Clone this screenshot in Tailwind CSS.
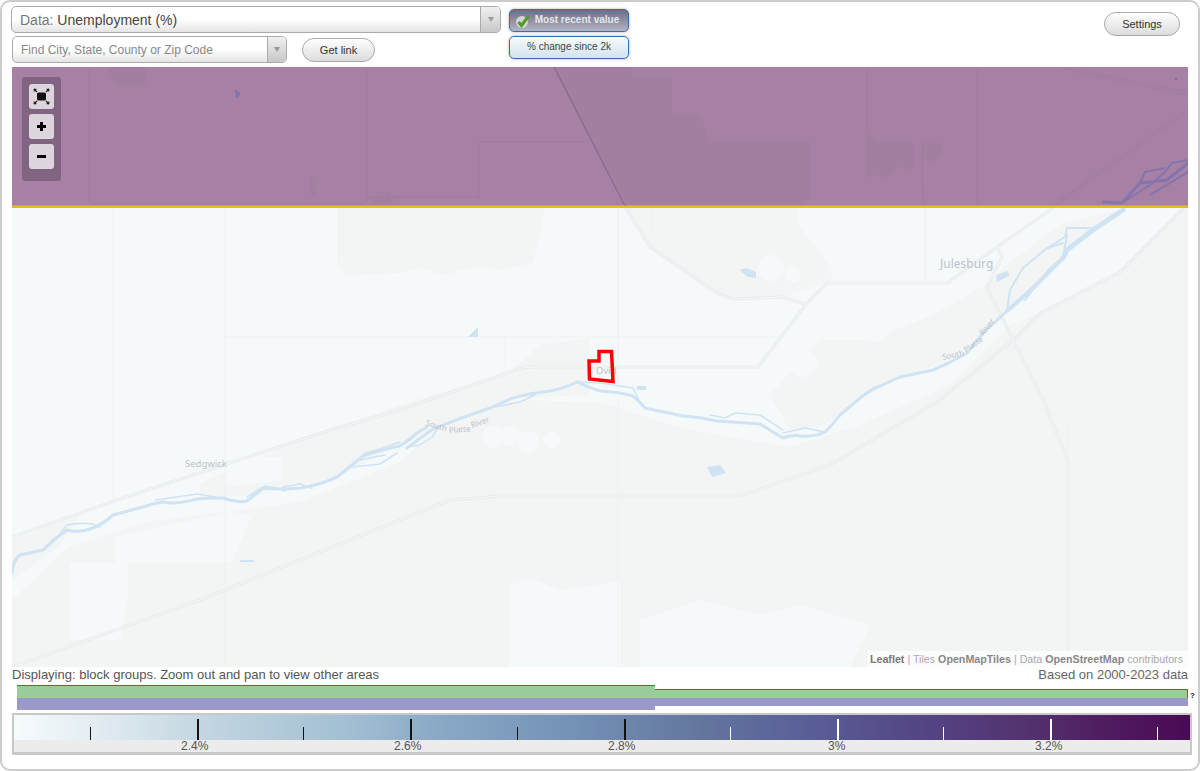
<!DOCTYPE html>
<html lang="en">
<head>
<meta charset="utf-8">
<title>Unemployment map</title>
<script src="https://cdn.jsdelivr.net/npm/@tailwindcss/browser@4"></script>
</head>
<body class="bg-white font-['Liberation_Sans',Arial,sans-serif]">
<div class="relative w-[1200px] h-[771px] overflow-hidden border-2 border-[#cccccc] rounded-[10px] bg-white text-[#333]">
  <!-- top controls -->
  <header class="flex h-[65px] items-start">
    <div class="ml-[9px] pt-[4px] flex flex-col">
      <div class="flex w-[490px] h-[27px] border border-[#aaa] rounded-[5px] overflow-hidden bg-gradient-to-b from-white from-50% to-[#e4e4e4]">
        <div class="flex-1 pl-[8px] text-[14px] leading-[27px] text-[#444]"><span class="text-[#777]">Data:</span> <span>Unemployment (%)</span></div>
        <div class="w-[20px] border-l border-[#aaa] bg-gradient-to-b from-[#f0f0f0] to-[#c8c8c8] flex items-center justify-center"><span class="block w-0 h-0 border-x-[3.5px] border-x-transparent border-t-[5px] border-t-[#999]"></span></div>
      </div>
      <div class="flex items-start mt-[3px] ml-px">
        <div class="flex w-[275px] h-[27px] border border-[#aaa] rounded-[5px] overflow-hidden bg-gradient-to-b from-white from-50% to-[#e4e4e4]">
          <div class="flex-1 pl-[8px] text-[12px] leading-[27px] text-[#888]">Find City, State, County or Zip Code</div>
          <div class="w-[19px] border-l border-[#aaa] bg-gradient-to-b from-[#f0f0f0] to-[#c8c8c8] flex items-center justify-center"><span class="block w-0 h-0 border-x-[3.5px] border-x-transparent border-t-[5px] border-t-[#999]"></span></div>
        </div>
        <button class="ml-[15px] mt-[2px] w-[73px] h-[24px] rounded-full border border-[#aaa] bg-gradient-to-b from-white to-[#dcdcdc] text-[11px] text-[#333]">Get link</button>
      </div>
    </div>
    <div class="ml-[8px] pt-[7px] flex flex-col gap-[4px]">
      <div class="relative w-[120px] h-[23px] rounded-[5px] border border-[#3a6ea5] bg-gradient-to-b from-[#6e6e80] to-[#b4b4c4] shadow-[0_0_3px_#aaa] text-center text-[10px] font-bold leading-[20px] text-[#e6e6ee] pl-[16px]">
        <svg class="absolute left-[5px] top-[3px]" width="15" height="16" viewBox="0 0 15 16"><circle cx="7" cy="9" r="6" fill="#d4d4d4"/><path d="M3.500 9 L6.500 12.500 L13.500 3" fill="none" stroke="#4f9a2a" stroke-width="3"/></svg>
        Most recent value
      </div>
      <div class="w-[120px] h-[23px] rounded-[5px] border border-[#3a6ea5] bg-gradient-to-b from-[#f6fafc] to-[#d2e3ec] shadow-[0_0_3px_#aaa] text-center text-[10px] leading-[20px] text-[#444]">% change since 2k</div>
    </div>
    <button class="ml-auto mr-[18px] mt-[10px] w-[76px] h-[24px] rounded-full border border-[#aaa] bg-gradient-to-b from-white to-[#dcdcdc] text-[11px] text-[#333]">Settings</button>
  </header>

  <!-- map -->
  <div class="relative mx-[10px] w-[1176px] h-[600px] overflow-hidden bg-[#f5f9fa]">
    <svg class="block" width="1176" height="600" viewBox="12 67 1176 600" font-family="'Noto Sans','Liberation Sans',sans-serif">
      <!-- land cover -->
      <g fill="#f2f5f4">
        <path d="M12 667V600L67 548L145 522L223 512L300 502L400 462L440 425L505 400L600 402L680 428L790 447L860 425L950 385L1010 325L1040 313L1120 272L1188 203V667Z"/>
        <path d="M338 208H545L538 243L532 263L503 270L477 267L443 275L417 268L400 273L345 276L338 262Z"/>
        <path d="M627 208H798V223L827 263L833 280L783 297L733 299L717 293L650 247Z"/>
        <path d="M200 483L300 440L337 428L400 405L510 372L540 345L590 338V395L510 398L400 445L337 477L250 495L200 500Z"/>
        <path d="M900 335L985 285L1010 262L1060 225L1125 208L1070 250L1010 310L985 335L945 362L900 378Z"/>
        <path d="M12 580V540L80 515L60 545Z"/>
        <path d="M820 340L870 340L945 310L960 350L880 385L825 425L790 430L770 395Z"/>
      </g>
      <g fill="#f5f9fa">
        <path d="M70 563H128V598L120 640L70 640Z"/>
        <path d="M115 537L230 512L252 515L232 563H115Z"/>
        <path d="M227 457H282V480L227 487Z"/>
        <path d="M510 585L530 578L560 590L600 585L620 580V667H510Z"/>
        <path d="M640 620L700 600L760 615L800 605L870 625L850 667H640Z"/>
        <path d="M290 430H337V418L300 422Z"/>
        <path d="M400 345L440 337L450 345L440 365L405 375L400 360Z"/>
        <circle cx="493" cy="437" r="11"/><circle cx="510" cy="436" r="10"/><circle cx="528" cy="442" r="11"/><circle cx="552" cy="440" r="9"/>
        <circle cx="771" cy="268" r="13"/><circle cx="793" cy="274" r="8"/>
        <circle cx="803" cy="363" r="14"/>
        <circle cx="852" cy="325" r="13"/><circle cx="876" cy="330" r="12"/>
        <path d="M1010 240L1025 232L1020 255L1010 258Z"/>
        <path d="M1125 222L1165 205L1150 225L1130 228Z"/>
      </g>
      <!-- section lines -->
      <g stroke="#eef1f2" stroke-width="1" fill="none">
        <path d="M113 207V500"/><path d="M225 207V667"/><path d="M618 207V667"/><path d="M652 207V230"/>
        <path d="M225 337H780"/><path d="M338 207V270"/><path d="M505 337V367"/>
        <path d="M925 207V282"/><path d="M1068 420V667"/>
      </g>
      <!-- roads -->
      <g fill="none" stroke-linejoin="round">
        <g stroke="#e7ebeb" stroke-width="3">
          <path d="M12 537L117 500L223 465L337 428L400 410L510 372Q520 367 535 367H758L807 303L827 283H947L997 247L1053 208"/>
          <path d="M625 207L650 247L717 293L733 299L783 297L807 305"/>
          <path d="M12 667L200 600L450 500L500 496H740L830 465L940 400L1013 340L1040 313L1120 272L1188 203"/>
          <path d="M997 247L1002 257L987 287L1013 340L1043 400L1068 460V650"/>
        </g>
        <g stroke="#f6f9f9" stroke-width="1">
          <path d="M12 537L117 500L223 465L337 428L400 410L510 372Q520 367 535 367H758L807 303L827 283H947L997 247L1053 208"/>
          <path d="M625 207L650 247L717 293L733 299L783 297L807 305"/>
          <path d="M12 667L200 600L450 500L500 496H740L830 465L940 400L1013 340L1040 313L1120 272L1188 203"/>
          <path d="M997 247L1002 257L987 287L1013 340L1043 400L1068 460V650"/>
        </g>
      </g>
      <!-- water -->
      <g fill="none" stroke="#d0e3f3" stroke-linejoin="round" stroke-linecap="round">
        <path stroke-width="3.200" d="M12 573Q13 560 20 555Q30 553 43 550L56 538L67 530Q78 533 90 529Q102 525 113 515L143 507Q155 503 163 502Q175 505 197 499Q210 498 223 498Q238 503 247 501Q255 495 263 488Q280 490 300 488Q320 485 337 477L363 456Q380 450 400 446Q410 440 417 433L427 427"/>
        <path stroke-width="1.500" d="M57 537L67 525Q80 522 92 524L100 527M155 500L177 497L197 494L215 497M247 497L258 490L265 486Q275 487 285 491M283 487L300 484L312 488M355 463L365 453L380 449L400 442M352 467L380 464L397 453M360 460L385 455M407 447L420 445L432 437L438 428"/>
        <path stroke-width="3" d="M407 448L433 429Q460 418 490 408L510 399Q530 393 550 391Q565 388 577 382Q590 388 600 391Q620 392 633 396Q640 402 645 408L683 416Q700 417 717 421L760 424L783 438Q795 434 800 436Q815 437 825 432Q835 422 840 415L860 398Q870 390 880 386L900 377L933 370Q950 363 967 353L983 333L1007 311"/>
        <path stroke-width="4" d="M1007 311L1033 288L1063 258"/>
        <path stroke-width="5" d="M1063 258L1067 250L1093 230L1123 210"/>
        <path stroke-width="1.600" d="M577 382L600 383L633 388L640 402M490 408L520 402L535 395M710 415L725 418L735 413L760 415L783 430M783 433L805 428L825 432"/>
        <path stroke-width="2" d="M1007 311L1010 290L1023 268Q1035 258 1047 248L1065 237L1067 228L1093 228M1063 257L1067 235M1025 300L1048 270L1063 257L1070 245M1048 248L1063 243"/>
      </g>
      <g fill="#d0e3f3">
        <path d="M739 270L746 268L756 272L756 278L748 277Z"/>
        <path d="M996 275L1008 271L1009 276L997 282Z"/>
        <path d="M637 386H646V390H637Z"/>
        <path d="M468 337L478 327V337Z"/>
        <path d="M707 467L720 465L726 473L712 477Z"/>
        <path d="M240 560H254V562H240Z"/>
      </g>
      <!-- place labels -->
      <g fill="#bcc3ca">
        <text x="940" y="268" font-size="12">Julesburg</text>
        <text x="185" y="467" font-size="9.500">Sedgwick</text>
        <text x="596" y="374" font-size="9.500">Ovid</text>
        <text x="0" y="0" font-size="8" transform="translate(425 425) rotate(17)">South</text>
        <text x="0" y="0" font-size="8" transform="translate(449 433) rotate(-4)">Platte</text>
        <text x="0" y="0" font-size="8" transform="translate(472 428) rotate(-20)">River</text>
        <text x="0" y="0" font-size="8" transform="translate(943 360) rotate(-12)">South</text>
        <text x="0" y="0" font-size="8" transform="translate(966 353) rotate(-35)">Platte</text>
        <text x="0" y="0" font-size="8" transform="translate(983 336) rotate(-50)">River</text>
      </g>
      <!-- selected boundary -->
      <path d="M589 361H599V351.500H611.500L613 381.500L589.500 379Z" fill="none" stroke="#ff0000" stroke-width="3.500"/>

      <!-- purple choropleth area -->
      <rect x="12" y="67" width="1176" height="139.500" fill="#a680a5"/>
      <g fill="#a27ea1">
        <path d="M554 67H632V78H672V113H699L710 142H810V198L799 205H627Z"/>
        <path d="M867 132L877 142H913V170L897 167L888 178L875 175L867 178Z"/>
        <path d="M922 143H942V155L931 163L922 157Z"/>
        <path d="M107 67H146V85H115Z"/>
        <path d="M367 197H385L388 190L393 197V205H375Z"/>
        <path d="M311 177H316V197H311Z"/>
      </g>
      <g fill="none" stroke="#a07c9f" stroke-width="1">
        <path d="M89 67V200L92 204H364L367 200V67"/>
        <path d="M479 142V197H367"/>
        <path d="M479 142H590"/>
        <path d="M867 67V132"/><path d="M922 143Q922 190 924 205"/><path d="M977 67V205"/>
        <path d="M1053 205L1188 108"/><path d="M1056 205L1188 112"/>
        <path d="M1062 67L1188 92"/><path d="M1062 69L1188 95"/>
      </g>
      <path d="M554 67L625 206" stroke="#8a6a8e" stroke-width="1.400" fill="none"/>
      <path d="M235 90L239 92L240 95L236 98L236 94Z" fill="#8474ac" stroke="#8474ac" stroke-width="1"/>
      <circle cx="1176" cy="79" r="1.500" fill="#8a7590"/>
      <g fill="none" stroke="#8474ac" stroke-linejoin="round">
        <path stroke-width="3" d="M1102 202L1122 203L1140 183L1167 180L1188 163"/>
        <path stroke-width="2" d="M1122 203L1150 185L1165 172L1172 163L1188 160M1140 183L1145 172L1165 168M1150 195L1188 172"/>
      </g>
      <rect x="12" y="205.500" width="1176" height="2.500" fill="#e3bf1c"/>
    </svg>

    <!-- zoom control overlay -->
    <div class="absolute left-[10px] top-[10px] w-[39px] h-[104px] rounded-[3px] bg-[#806482] px-[7px] pt-[7px] flex flex-col gap-[5px]">
      <div class="w-[25px] h-[25px] rounded-[3px] bg-[#ddd5dd] flex items-center justify-center">
        <svg width="17" height="17" viewBox="0 0 17 17"><rect x="4" y="4.500" width="9" height="8" rx="1.500" fill="#111"/><path d="M1 1L4 4M16 1L13 4M1 16L4 13M16 16L13 13" stroke="#222" stroke-width="1.200"/><path d="M1 1H3.500L1 3.500ZM16 1H13.500L16 3.500ZM1 16H3.500L1 13.500ZM16 16H13.500L16 13.500Z" fill="#222" stroke="#222" stroke-width=".5"/></svg>
      </div>
      <div class="w-[25px] h-[25px] rounded-[3px] bg-[#ddd5dd] flex items-center justify-center">
        <svg width="11" height="11" viewBox="0 0 11 11"><path d="M5.500 1V10M1 5.500H10" stroke="#000" stroke-width="3"/></svg>
      </div>
      <div class="w-[25px] h-[25px] rounded-[3px] bg-[#ddd5dd] flex items-center justify-center">
        <svg width="11" height="11" viewBox="0 0 11 11"><path d="M1 5.500H10" stroke="#000" stroke-width="3"/></svg>
      </div>
    </div>
    <!-- attribution overlay -->
    <div class="absolute right-0 bottom-0 h-[16px] pl-[3px] pr-[5px] bg-white/70 text-[10.700px] leading-[16px] text-[#aaa] whitespace-nowrap"><b class="text-[#777]">Leaflet</b> | Tiles <b class="text-[#888]">OpenMapTiles</b> | Data <b class="text-[#888]">OpenStreetMap</b> contributors</div>
  </div>

  <!-- caption row -->
  <div class="flex justify-between h-[18px] px-[10px] text-[13px] leading-[16px] text-[#666]">
    <span class="text-[#555]">Displaying: block groups. Zoom out and pan to view other areas</span>
    <span>Based on 2000-2023 data</span>
  </div>

  <!-- coverage bars -->
  <div class="flex items-start ml-[15px] h-[28px]">
    <div class="w-[638px]">
      <div class="h-[13px] border-t border-[#2f8a2f] bg-[#9acb99]"></div>
      <div class="h-[12px] bg-[#9999ca]"></div>
    </div>
    <div class="w-[533px] mt-[4px]">
      <div class="h-[9px] border-t border-r border-[#2f8a2f] bg-[#9acb99]"></div>
      <div class="h-[8px] bg-[#9999ca]"></div>
    </div>
    <span class="ml-[2px] mt-[7px] text-[8px] leading-[8px] font-bold text-[#222]">?</span>
  </div>

  <!-- colour scale -->
  <div class="ml-[10px] w-[1180px] h-[42px] border-2 border-b-[3px] border-[#c8c8c8]">
    <div class="relative h-[25px] bg-[linear-gradient(to_right,#f6fbfd_0%,#dfeaf0_8%,#c3d6e1_16%,#a3c0d4_28%,#8aa9c5_36%,#7390b7_48%,#64779f_58%,#595d97_68%,#544383_78%,#53326f_86%,#4f1c60_93%,#4a0a55_100%)]">
      <span class="absolute left-[76px] top-[12px] w-px h-[13px] bg-[#111]"></span>
      <span class="absolute left-[183px] top-[4px] w-[2px] h-[21px] bg-[#111]"></span>
      <span class="absolute left-[289px] top-[12px] w-px h-[13px] bg-[#111]"></span>
      <span class="absolute left-[396px] top-[4px] w-[2px] h-[21px] bg-[#111]"></span>
      <span class="absolute left-[503px] top-[12px] w-px h-[13px] bg-[#111]"></span>
      <span class="absolute left-[610px] top-[4px] w-[2px] h-[21px] bg-[#111]"></span>
      <span class="absolute left-[716px] top-[12px] w-px h-[13px] bg-white"></span>
      <span class="absolute left-[823px] top-[4px] w-[2px] h-[21px] bg-white"></span>
      <span class="absolute left-[929px] top-[12px] w-px h-[13px] bg-white"></span>
      <span class="absolute left-[1036px] top-[4px] w-[2px] h-[21px] bg-white"></span>
      <span class="absolute left-[1143px] top-[12px] w-px h-[13px] bg-white"></span>
    </div>
    <div class="relative h-[12px] bg-[#ececec] text-[12px] leading-[13px] text-[#555]">
      <span class="absolute left-[167px]">2.4%</span>
      <span class="absolute left-[380px]">2.6%</span>
      <span class="absolute left-[594px]">2.8%</span>
      <span class="absolute left-[814px]">3%</span>
      <span class="absolute left-[1021px]">3.2%</span>
    </div>
  </div>
</div>
</body>
</html>
